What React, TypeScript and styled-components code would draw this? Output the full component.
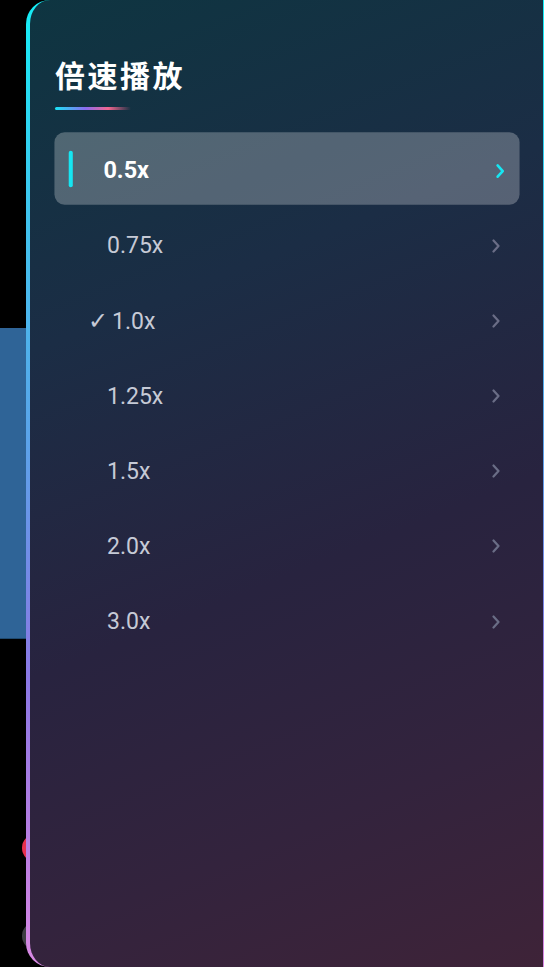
import React, { useState } from 'react';
import styled, { createGlobalStyle } from 'styled-components';

const speeds = ['0.5x', '0.75x', '1.0x', '1.25x', '1.5x', '2.0x', '3.0x'];

const GlobalStyle = createGlobalStyle`
  html, body {
    margin: 0;
    padding: 0;
    background: #000;
    overflow: hidden;
  }
  body {
    font-family: Roboto, "Noto Sans", "Noto Sans CJK SC", sans-serif;
  }
`;

const ChevronIcon = ({ selected }: { selected?: boolean }) => (
  <Chevron width="8" height="14" viewBox="0 0 8 14" selected={selected}>
    <polyline points="1.5,1.5 6.5,7 1.5,12.5" />
  </Chevron>
);

const App = () => {
  const [active, setActive] = useState('0.5x');
  const current = '1.0x';

  return (
    <Stage>
      <GlobalStyle />
      <Backdrop>
        <BlueBlock />
        <Dot color="#e8304f" top={834} />
        <Dot color="#3d3d42" top={922} />
      </Backdrop>

      <Panel>
        <Title>倍速播放</Title>
        <TitleLine />
        <List>
          {speeds.map((s) => (
            <Row key={s} selected={s === active} onClick={() => setActive(s)}>
              {s === active && <Indicator />}
              <Label selected={s === active}>
                {s === current && <Check>✓</Check>}
                {s}
              </Label>
              <ChevronIcon selected={s === active} />
            </Row>
          ))}
        </List>
      </Panel>
    </Stage>
  );
};

const Stage = styled.div`
  position: relative;
  width: 544px;
  height: 967px;
  overflow: hidden;
  background: #000;
  display: flex;
  padding-left: 26px;
  box-sizing: border-box;
`;

const Backdrop = styled.div`
  position: absolute;
  inset: 0;
`;

const BlueBlock = styled.div`
  position: absolute;
  left: 0;
  top: 328px;
  width: 40px;
  height: 310px;
  background: #2f6497;
  border-bottom: 1px solid #1f4a70;
`;

const Dot = styled.div<{ color: string; top: number }>`
  position: absolute;
  left: 22px;
  top: ${(p) => p.top}px;
  width: 28px;
  height: 28px;
  border-radius: 50%;
  background: ${(p) => p.color};
`;

const Panel = styled.div`
  position: relative;
  flex: 0 0 521px;
  height: 967px;
  box-sizing: border-box;
  padding: 56px 24px 0 25px;
  border-style: solid;
  border-color: transparent;
  border-width: 0 4px 0 4px;
  border-radius: 24px 0 0 24px;
  background:
    linear-gradient(158deg, #0e3541 0%, #1b2d45 30%, #28233f 58%, #33233d 80%, #3e2338 100%) padding-box,
    linear-gradient(180deg, #14eef6 0%, #3fc4ee 22%, #5aa4ea 45%, #8a78e4 70%, #c07fe2 90%, #d98ae4 100%) border-box;
`;

const Title = styled.h2`
  margin: 0;
  font-family: "Noto Sans CJK SC", "Noto Sans", sans-serif;
  font-size: 30px;
  line-height: 36px;
  font-weight: 700;
  letter-spacing: 2.5px;
  color: #ffffff;
`;

const TitleLine = styled.div`
  margin-top: 15px;
  width: 76px;
  height: 3px;
  border-radius: 2px;
  background: linear-gradient(90deg, #19e3f5 0%, #8a6cf0 40%, #f2668f 70%, rgba(242, 102, 143, 0) 100%);
`;

const List = styled.div`
  margin-top: 23px;
  padding: 0 4px;
  display: flex;
  flex-direction: column;
  gap: 4.2px;
`;

const Row = styled.div<{ selected?: boolean }>`
  position: relative;
  height: 71px;
  display: flex;
  align-items: center;
  padding: 0 15px 0 48px;
  border-radius: 10px;
  cursor: pointer;
  background: ${(p) => (p.selected ? 'rgba(255, 255, 255, 0.26)' : 'transparent')};
  transform: ${(p) => (p.selected ? 'scale(1.02)' : 'none')};
`;

const Indicator = styled.span`
  position: absolute;
  left: 14px;
  top: 50%;
  width: 4px;
  height: 36px;
  margin-top: -18px;
  border-radius: 2px;
  background: #16e6f2;
`;

const Label = styled.span<{ selected?: boolean }>`
  flex: 1;
  margin-top: 4px;
  font-size: 23px;
  font-weight: ${(p) => (p.selected ? 700 : 400)};
  color: ${(p) => (p.selected ? '#ffffff' : '#c6cad6')};
`;

const Check = styled.span`
  display: inline-block;
  margin-left: -19px;
  margin-right: 4px;
  font-family: "DejaVu Sans", sans-serif;
  font-size: 24px;
  font-weight: 300;
`;

const Chevron = styled.svg<{ selected?: boolean }>`
  flex: none;
  margin-top: 4px;
  fill: none;
  stroke: ${(p) => (p.selected ? '#16e6f2' : '#6a6d86')};
  stroke-width: ${(p) => (p.selected ? 2.6 : 2.2)};
  stroke-linecap: round;
  stroke-linejoin: round;
`;

export default App;
